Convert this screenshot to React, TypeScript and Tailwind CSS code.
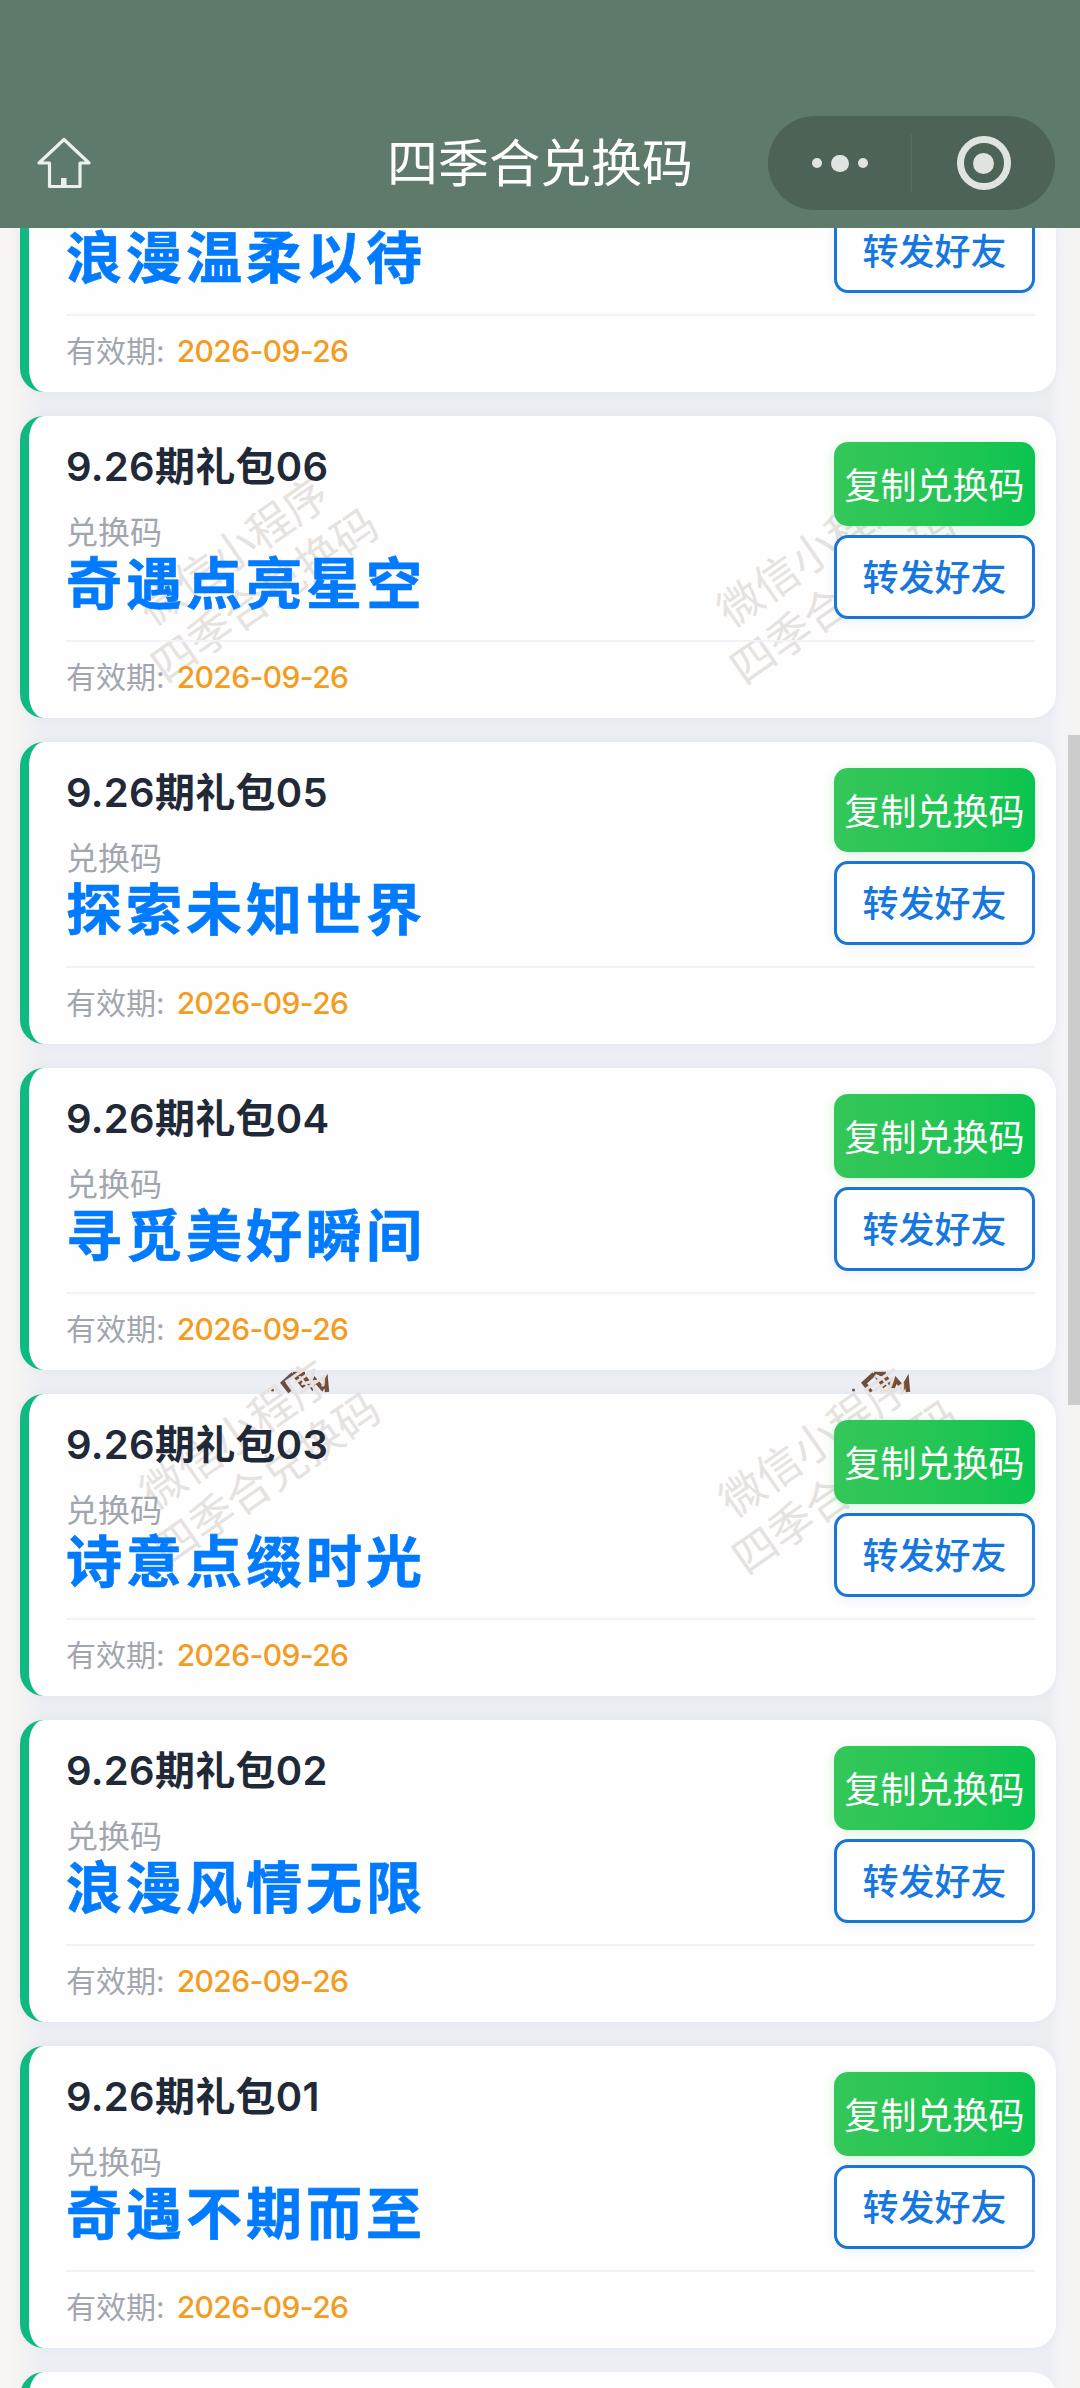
import React from "react";

const cards = [
  ["9.26期礼包07", "浪漫温柔以待"],
  ["9.26期礼包06", "奇遇点亮星空"],
  ["9.26期礼包05", "探索未知世界"],
  ["9.26期礼包04", "寻觅美好瞬间"],
  ["9.26期礼包03", "诗意点缀时光"],
  ["9.26期礼包02", "浪漫风情无限"],
  ["9.26期礼包01", "奇遇不期而至"],
];

function Card({ title, code }: { title: string; code: string }) {
  return (
    <div className="h-[302px] rounded-[24px] border-l-[9px] border-[#10b981] bg-[#fffefe] pl-[37px] pr-[21px] pt-[26px] shadow-[0_0_8px_rgba(120,135,185,0.08)]">
      <div className="relative z-[2] flex h-[198px] justify-between">
        <div className="flex flex-col">
          <div className="text-[40px] font-semibold leading-[50px] tracking-[0.3px] text-[#1f2937]">{title}</div>
          <div className="mt-[21px] text-[32px] leading-[40px] text-[#a1a6af]">兑换码</div>
          <div className="mt-[1px] text-[56px] font-bold leading-[60px] tracking-[4px] text-[#007aff] [-webkit-text-stroke:0.6px_#007aff]">{code}</div>
        </div>
        <div className="flex w-[201px] flex-col gap-[9px]">
          <button className="h-[84px] rounded-[14px] bg-gradient-to-r from-[#34c759] to-[#09c44f] pt-[4px] text-[36px] text-white shadow-[0_2px_12px_rgba(52,199,89,0.2)]">
            复制兑换码
          </button>
          <button className="h-[84px] rounded-[14px] border-[3px] border-[#1976d2] bg-white pt-[2px] text-[36px] font-medium text-[#1677e0] shadow-[0_3px_10px_rgba(25,118,210,0.1)]">
            转发好友
          </button>
        </div>
      </div>
      <div className="relative z-[2] h-[2px] bg-[#f1f3f7]" />
      <div className="relative z-[2] mt-[15px] flex text-[30px] leading-[40px]">
        <span className="text-[#a1a6af]">有效期:</span>
        <span className="ml-[12px] font-medium tracking-[-0.6px] text-[#f39c1f]">2026-09-26</span>
      </div>
    </div>
  );
}

function Watermark({ pos }: { pos: string }) {
  return (
    <div className={`absolute z-[1] -translate-x-1/2 -translate-y-1/2 -rotate-[35deg] whitespace-nowrap text-center text-[44px] leading-[54px] text-[#e6e2e0] ${pos}`}>
      <div>微信小程序</div>
      <div>四季合兑换码</div>
    </div>
  );
}

function Doodle({ pos }: { pos: string }) {
  return (
    <svg
      className={`absolute -z-10 h-[30px] w-[60px] ${pos}`}
      viewBox="0 0 60 30"
      fill="none"
      stroke="#6f4e3d"
      strokeWidth="4.4"
    >
      <path d="M22 3 L12 12 L19 21" />
      <path d="M22 2 L33 16" />
      <path d="M22 3 H34" />
      <path d="M31 3 L41 16 L44 9 L51 17 L55 10 L56 21" />
      <circle cx="1.5" cy="19" r="1.5" fill="#6f4e3d" stroke="none" />
    </svg>
  );
}

export default function App() {
  return (
    <div className="relative h-[2388px] w-[1080px] overflow-hidden bg-[#f7f5f3] font-['Inter','Noto_Sans_CJK_SC',sans-serif]">
      <main className="relative z-0 flex flex-col gap-[24px] bg-[linear-gradient(to_right,#f8f5f3_0px,#f8f5f3_10px,#eceef3_44px,#eceef3_1050px,#f3f3f6_1058px,#f6f4f3_1076px)] pl-[20px] pr-[24px] pt-[90px]">
        <Doodle pos="left-[271px] top-[1371px]" />
        <Doodle pos="left-[852px] top-[1371px]" />
        <Watermark pos="left-[249px] top-[573px]" />
        <Watermark pos="left-[828px] top-[575px]" />
        <Watermark pos="left-[251px] top-[1457px]" />
        <Watermark pos="left-[830px] top-[1465px]" />
        {cards.map(([t, c]) => (
          <Card key={t} title={t} code={c} />
        ))}
        <div className="h-[302px] rounded-[24px] border-l-[9px] border-[#10b981] bg-[#fffefe]" />
      </main>

      <div className="absolute right-0 top-[735px] h-[670px] w-[12px] bg-[#cccccc]" />

      <header className="absolute inset-x-0 top-0 z-10 grid h-[228px] grid-cols-3 items-start bg-[#5e7a6b] pt-[116px]">
        <div className="pl-[36px] pt-[20px]">
          <svg width="56" height="54" viewBox="0 0 56 54" fill="none" stroke="#eaf0ec" strokeWidth="3.2" strokeLinejoin="round">
            <path d="M28 3.5 L3 27 H13.5 V50.5 H44 V27 H53 Z" />
            <rect x="25" y="42" width="5.5" height="9" fill="#eaf0ec" stroke="none" />
          </svg>
        </div>
        <h1 className="pt-[1px] text-center text-[51px] font-normal leading-[94px] text-white">四季合兑换码</h1>
        <div className="flex justify-end pr-[25px]">
          <div className="flex h-[94px] w-[287px] items-center rounded-full bg-[#4c6356]">
            <div className="flex flex-1 items-center justify-center gap-[9px]">
              <span className="h-[10px] w-[10px] rounded-full bg-[#dfe4e1]" />
              <span className="h-[17px] w-[18px] rounded-full bg-[#dfe4e1]" />
              <span className="h-[10px] w-[10px] rounded-full bg-[#dfe4e1]" />
            </div>
            <div className="h-[58px] w-px bg-[#58705f]" />
            <div className="flex flex-1 items-center justify-center">
              <div className="flex h-[54px] w-[54px] items-center justify-center rounded-full border-[7px] border-[#dfe4e1]">
                <span className="h-[21px] w-[21px] shrink-0 rounded-full bg-[#dfe4e1]" />
              </div>
            </div>
          </div>
        </div>
      </header>
    </div>
  );
}
